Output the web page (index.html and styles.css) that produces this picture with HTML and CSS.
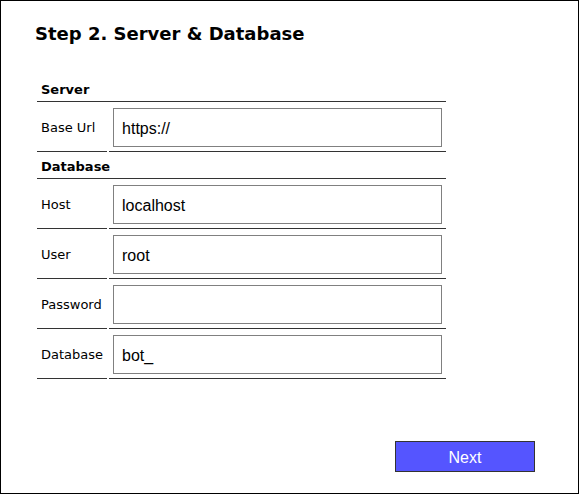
FILE: index.html
```html
<!DOCTYPE html>
<html>
<head>
<meta charset="utf-8">
<link rel="stylesheet" href="styles.css">
</head>
<body>
<div class="wizard">
  <h1 class="title">Step 2. Server &amp; Database</h1>
  <table class="form">
    <tr class="section"><td colspan="2">Server</td></tr>
    <tr class="field">
      <td class="label">Base Url</td>
      <td class="control"><input type="text" value="https://"></td>
    </tr>
    <tr class="section"><td colspan="2">Database</td></tr>
    <tr class="field">
      <td class="label">Host</td>
      <td class="control"><input type="text" value="localhost"></td>
    </tr>
    <tr class="field">
      <td class="label">User</td>
      <td class="control"><input type="text" value="root"></td>
    </tr>
    <tr class="field">
      <td class="label">Password</td>
      <td class="control"><input type="password" value=""></td>
    </tr>
    <tr class="field">
      <td class="label">Database</td>
      <td class="control"><input type="text" value="bot_"></td>
    </tr>
  </table>
  <div class="actions">
    <button class="next" type="button">Next</button>
  </div>
</div>
</body>
</html>
```
FILE: styles.css
```css
html, body {
  margin: 0;
  padding: 0;
  background: #fff;
}
.wizard {
  box-sizing: border-box;
  width: 579px;
  height: 494px;
  border: 1px solid #000;
  padding: 22px 43px 21px 34px;
  display: flex;
  flex-direction: column;
  align-items: flex-start;
  font-family: "DejaVu Sans", Verdana, sans-serif;
  color: #000;
}
.title {
  margin: 0;
  font-size: 18px;
  line-height: 22px;
  font-weight: bold;
}
.form {
  margin-top: 30px;
  border-collapse: separate;
  border-spacing: 2px 0;
  font-size: 13px;
}
.form td {
  border-bottom: 1px solid #333;
  padding: 0 4px;
}
.section td {
  font-weight: bold;
  line-height: 15px;
  padding-top: 7px;
  padding-bottom: 4px;
}
.field td {
  padding-top: 6px;
  padding-bottom: 4px;
  vertical-align: middle;
}
.label {
  width: 62px;
  white-space: nowrap;
}
.control {
  width: 329px;
}
.control input {
  display: block;
  box-sizing: border-box;
  width: 329px;
  height: 39px;
  margin: 0;
  border: 1px solid #808080;
  padding: 2px 8px 0;
  font-family: "Liberation Sans", Arial, sans-serif;
  font-size: 16px;
  color: #000;
  background: #fff;
  outline: none;
}
.actions {
  margin-top: auto;
  align-self: stretch;
  display: flex;
  justify-content: flex-end;
}
.next {
  box-sizing: border-box;
  width: 140px;
  height: 31px;
  border: 1px solid #333;
  background: #5555ff;
  color: #fff;
  font-family: "Liberation Sans", Arial, sans-serif;
  font-size: 16px;
  padding: 2px 0 0;
  margin: 0;
}
```
